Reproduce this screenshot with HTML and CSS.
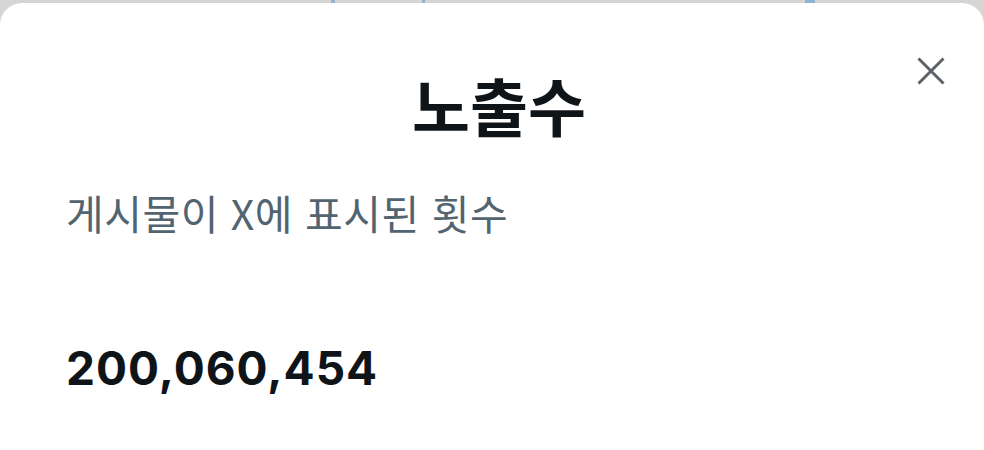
FILE: index.html
```html
<!DOCTYPE html>
<html lang="ko">
<head>
<meta charset="utf-8">
<link rel="stylesheet" href="styles.css">
</head>
<body>
<div class="backdrop">
  <span class="peek p1"></span>
  <span class="peek p2"></span>
  <span class="peek p3"></span>
</div>
<div class="sheet">
  <button class="close" aria-label="닫기">
    <svg viewBox="0 0 28 28" width="28" height="28"><path d="M1.5 1.5 L26.5 26.5 M26.5 1.5 L1.5 26.5" stroke="#5b6369" stroke-width="3" stroke-linecap="butt" fill="none"/></svg>
  </button>
  <h1 class="title">노출수</h1>
  <p class="desc">게시물이 X에 표시된 횟수</p>
  <div class="count">200,060,454</div>
</div>
</body>
</html>
```
FILE: styles.css
```css
html, body {
  margin: 0;
  padding: 0;
  background: #d5d5d5;
  width: 984px;
  height: 450px;
  overflow: hidden;
}
.backdrop {
  position: absolute;
  top: 0;
  left: 0;
  width: 984px;
  height: 4px;
}
.peek {
  position: absolute;
  top: 0;
  height: 3px;
  background: #8fb3d3;
}
.p1 { left: 331px; width: 4px; }
.p2 { left: 422px; width: 3px; }
.p3 { left: 805px; width: 10px; }
.sheet {
  position: relative;
  margin-top: 3px;
  height: 447px;
  background: #ffffff;
  border-radius: 22px 22px 0 0;
  padding: 57px 66px 0 66px;
  box-sizing: border-box;
  font-family: "Noto Sans CJK KR", "Noto Sans", sans-serif;
}
.close {
  position: absolute;
  top: 54px;
  right: 39px;
  background: none;
  border: none;
  padding: 0;
  width: 28px;
  height: 28px;
}
.close svg { display: block; }
.title {
  margin: 0;
  padding-left: 14px;
  text-align: center;
  font-size: 63px;
  line-height: 88px;
  font-weight: 700;
  color: #0f1419;
}
.desc {
  margin: 36px 0 0 0;
  font-size: 41px;
  line-height: 56px;
  letter-spacing: 0.5px;
  font-weight: 400;
  color: #536471;
}
.count {
  margin-top: 98px;
  font-family: Inter, "Noto Sans", sans-serif;
  font-size: 46px;
  line-height: 60px;
  letter-spacing: 1px;
  font-weight: 700;
  color: #0f1419;
}
```
